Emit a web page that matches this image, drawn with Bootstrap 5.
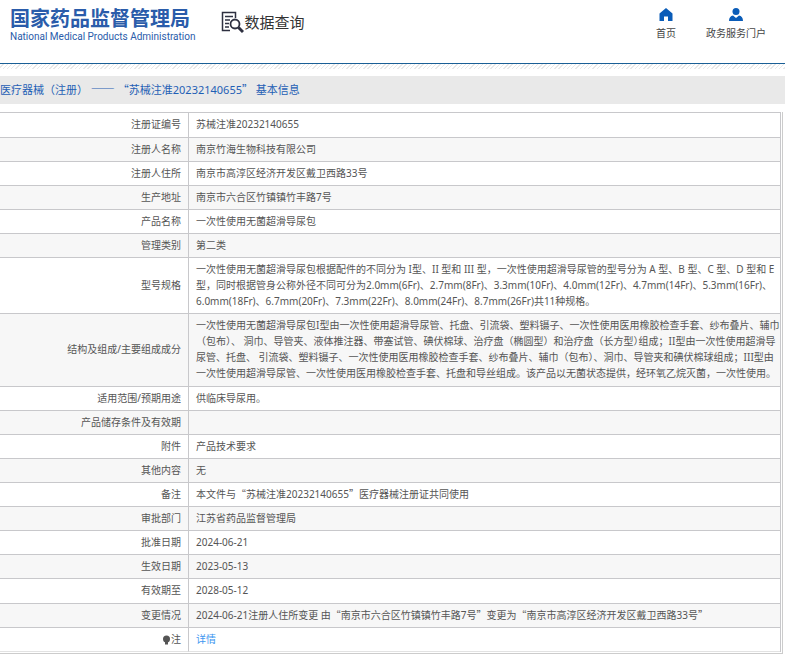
<!DOCTYPE html>
<html lang="zh-CN">
<head>
<meta charset="utf-8">
<meta name="viewport" content="width=device-width, initial-scale=1">
<title>国家药品监督管理局 数据查询</title>
<link href="https://cdn.jsdelivr.net/npm/bootstrap@5.3.0/dist/css/bootstrap.min.css" rel="stylesheet">
<style>
body{font-family:"Noto Sans","Noto Sans CJK SC",sans-serif;font-size:10px;line-height:16px;color:#555}
.site-head{height:63px;padding:7px 19px 0 10px}
.brand-name{font-family:"Noto Sans CJK SC",sans-serif;font-weight:700;font-size:20px;line-height:22px;color:#2a5caa}
.brand-en{font-family:Roboto,sans-serif;font-size:10px;line-height:16px;color:#2a5caa}
.query-title{font-family:"Noto Sans CJK SC",sans-serif;font-size:15px;line-height:30px;color:#333;margin-left:26px}
.top-nav{gap:30px}
.top-link{color:#444}
.stripes{border-top:1px solid #1a5f96;height:6px;background:repeating-linear-gradient(135deg,#fff 0 2px,#e8e8e8 2px 3px);background-clip:padding-box}
.page-title{background:#e9e9e9;color:#1f5fb5;font-size:11px;line-height:28px;margin:7px 0 8px}
.cjk{font-family:"Noto Sans CJK SC",sans-serif;line-height:1}
.dash{font-size:12px}
.half{font-feature-settings:"halt"}
.frame{margin-right:2px;padding:0 1px 1px 0;border:solid #ccc;border-width:0 1px 1px 0}
.info{border:solid #c8c8cb;border-width:1px 1px 0 0;border-collapse:separate;border-spacing:0}
.info th,.info td{padding:3px 0 4px 7px;border-bottom:1px solid #c8c8cb;vertical-align:middle}
.info th{width:189px;min-width:189px;padding:3px 7px 4px 0;text-align:right;font-weight:400;border-right:1px solid #c8c8cb}
.info tr:nth-child(even){background:#f7f7f7}
.info .roomy>*{padding-bottom:5px}
.info tr:last-child>*{border-bottom-color:#e2e2e2}
.detail{color:#3c96f0}
</style>
</head>
<body>
<header class="site-head d-flex align-items-start">
  <div class="text-nowrap">
    <div class="brand-name">国家药品监督管理局</div>
    <div class="brand-en">National Medical Products Administration</div>
  </div>
  <div class="query-title d-flex align-items-center text-nowrap">
    <svg width="23" height="23" viewBox="0 0 23 23" fill="none" stroke="#2e3040" aria-hidden="true">
      <path d="M14.500 7V1.500H1.500V19.500H9" stroke-width="1.500"/>
      <path d="M4 5.500H12M4 9H9M4 12.500H8M4 16H8" stroke-width="1.400"/>
      <circle cx="14" cy="13" r="4.500" stroke-width="1.800"/>
      <path d="M17.500 16.500L22 21" stroke-width="3"/>
    </svg>
    <span>数据查询</span>
  </div>
  <nav class="top-nav ms-auto d-flex text-center text-nowrap">
    <a class="top-link text-decoration-none" href="#">
      <svg class="d-block mx-auto" width="14" height="18" viewBox="0 0 14 18" aria-hidden="true"><path d="M7 1L.5 6.500V14H5V9.500h4V14h4.500V6.500z" fill="#0a5cb8"/></svg>
      首页
    </a>
    <a class="top-link text-decoration-none" href="#">
      <svg class="d-block mx-auto" width="14" height="18" viewBox="0 0 14 18" aria-hidden="true"><circle cx="7" cy="4.500" r="3.500" fill="#0a5cb8"/><path d="M0 14c0-3.500 1.500-5 4-5.500l3 2.500 3-2.500c2.500.5 4 2 4 5.500z" fill="#0a5cb8"/></svg>
      政务服务门户
    </a>
  </nav>
</header>
<div class="stripes"></div>
<main>
  <h1 class="page-title fw-normal text-nowrap">医疗器械（注册） <span class="cjk dash">——</span> <span class="cjk">“</span>苏械注准20232140655<span class="cjk">”</span> 基本信息</h1>
  <div class="frame">
    <table class="info w-100">
      <tbody>
      <tr class="roomy"><th scope="row">注册证编号</th><td>苏械注准20232140655</td></tr>
      <tr><th scope="row">注册人名称</th><td>南京竹海生物科技有限公司</td></tr>
      <tr><th scope="row">注册人住所</th><td>南京市高淳区经济开发区戴卫西路33号</td></tr>
      <tr><th scope="row">生产地址</th><td>南京市六合区竹镇镇竹丰路7号</td></tr>
      <tr><th scope="row">产品名称</th><td>一次性使用无菌超滑导尿包</td></tr>
      <tr><th scope="row">管理类别</th><td>第二类</td></tr>
      <tr><th scope="row">型号规格</th><td class="text-nowrap">一次性使用无菌超滑导尿包根据配件的不同分为 I型、II 型和 III 型，一次性使用超滑导尿管的型号分为 A 型、B 型、C 型、D 型和 E<br>型，同时根据管身公称外径不同可分为2.0mm(6Fr)、2.7mm(8Fr)、3.3mm(10Fr)、4.0mm(12Fr)、4.7mm(14Fr)、5.3mm(16Fr)、<br>6.0mm(18Fr)、6.7mm(20Fr)、7.3mm(22Fr)、8.0mm(24Fr)、8.7mm(26Fr)共11种规格。</td></tr>
      <tr class="roomy"><th scope="row">结构及组成/主要组成成分</th><td class="text-nowrap">一次性使用无菌超滑导尿包I型由一次性使用超滑导尿管、托盘、引流袋、塑料镊子、一次性使用医用橡胶检查手套、纱布叠片、辅巾<br>（包布）、 洞巾、导管夹、液体推注器、带塞试管、碘伏棉球、治疗盘（椭圆型）和治疗盘（长方型<span class="cjk half">）</span>组成；II型由一次性使用超滑导<br>尿管、托盘、 引流袋、塑料镊子、一次性使用医用橡胶检查手套、纱布叠片、辅巾（包布）、洞巾、导管夹和碘伏棉球组成；III型由<br>一次性使用超滑导尿管、一次性使用医用橡胶检查手套、托盘和导丝组成。该产品以无菌状态提供，经环氧乙烷灭菌，一次性使用。</td></tr>
      <tr><th scope="row">适用范围/预期用途</th><td>供临床导尿用。</td></tr>
      <tr><th scope="row">产品储存条件及有效期</th><td></td></tr>
      <tr><th scope="row">附件</th><td>产品技术要求</td></tr>
      <tr><th scope="row">其他内容</th><td>无</td></tr>
      <tr><th scope="row">备注</th><td>本文件与<span class="cjk">“</span>苏械注准20232140655<span class="cjk">”</span>医疗器械注册证共同使用</td></tr>
      <tr><th scope="row">审批部门</th><td>江苏省药品监督管理局</td></tr>
      <tr><th scope="row">批准日期</th><td>2024-06-21</td></tr>
      <tr><th scope="row">生效日期</th><td>2023-05-13</td></tr>
      <tr class="roomy"><th scope="row">有效期至</th><td>2028-05-12</td></tr>
      <tr><th scope="row">变更情况</th><td>2024-06-21注册人住所变更 由<span class="cjk">“</span>南京市六合区竹镇镇竹丰路7号<span class="cjk">”</span>变更为<span class="cjk">“</span>南京市高淳区经济开发区戴卫西路33号<span class="cjk">”</span></td></tr>
      <tr><th scope="row"><svg width="9" height="10" viewBox="0 0 9 10" aria-hidden="true"><circle cx="4.500" cy="4" r="3.500" fill="#555"/><path d="M3 7h3v2.500H3z" fill="#555"/></svg>注</th><td><a class="detail text-decoration-none" href="#">详情</a></td></tr>
      </tbody>
    </table>
  </div>
</main>
<script src="https://cdn.jsdelivr.net/npm/bootstrap@5.3.0/dist/js/bootstrap.bundle.min.js"></script>
</body>
</html>
